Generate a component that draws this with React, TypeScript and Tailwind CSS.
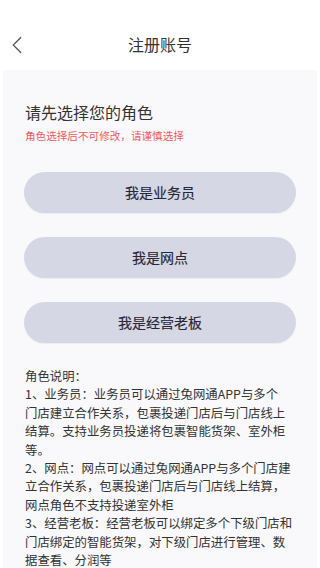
import { ChevronLeft } from "lucide-react";

const roles = ["我是业务员", "我是网点", "我是经营老板"];

const desc = [
  "角色说明：",
  "1、业务员：业务员可以通过兔网通APP与多个",
  "门店建立合作关系，包裹投递门店后与门店线上",
  "结算。支持业务员投递将包裹智能货架、室外柜",
  "等。",
  "2、网点：网点可以通过兔网通APP与多个门店建",
  "立合作关系，包裹投递门店后与门店线上结算，",
  "网点角色不支持投递室外柜",
  "3、经营老板：经营老板可以绑定多个下级门店和",
  "门店绑定的智能货架，对下级门店进行管理、数",
  "据查看、分润等",
];

export default function App() {
  return (
    <div className="w-[320px] h-[568px] overflow-hidden bg-white font-['Noto_Sans_CJK_SC',sans-serif] text-[#333]">
      {/* Header */}
      <div className="relative h-[70px] flex items-end justify-center pb-[15px]">
        <button className="absolute left-[2px] top-[30px] text-[#555]">
          <ChevronLeft size={30} strokeWidth={1} />
        </button>
        <h1 className="text-[16px] leading-[22px] text-[#333]">注册账号</h1>
      </div>

      {/* Body */}
      <div className="mx-[3px] h-[498px] bg-[#f9f9fb] px-[22px] pt-[31px]">
        <h2 className="text-[16px] leading-[22px] text-[#333]">请先选择您的角色</h2>
        <p className="mt-[6px] text-[10.6px] leading-[14px] text-[#f05a5c]">
          角色选择后不可修改，请谨慎选择
        </p>

        <div className="mt-[29px] -mx-[1px] flex flex-col gap-[24px]">
          {roles.map((r) => (
            <button
              key={r}
              className="h-[41px] w-full rounded-full bg-[#d5d7e5] text-[14px] font-normal text-[#262636] [-webkit-text-stroke:0.15px_#262636] shadow-[0_1px_1px_rgba(0,0,0,0.05)]"
            >
              {r}
            </button>
          ))}
        </div>

        <div className="mt-[24px] text-[12.4px] leading-[18.4px] text-[#333]">
          {desc.map((line, i) => (
            <div key={i} className="whitespace-nowrap">
              {line}
            </div>
          ))}
        </div>
      </div>
    </div>
  );
}
